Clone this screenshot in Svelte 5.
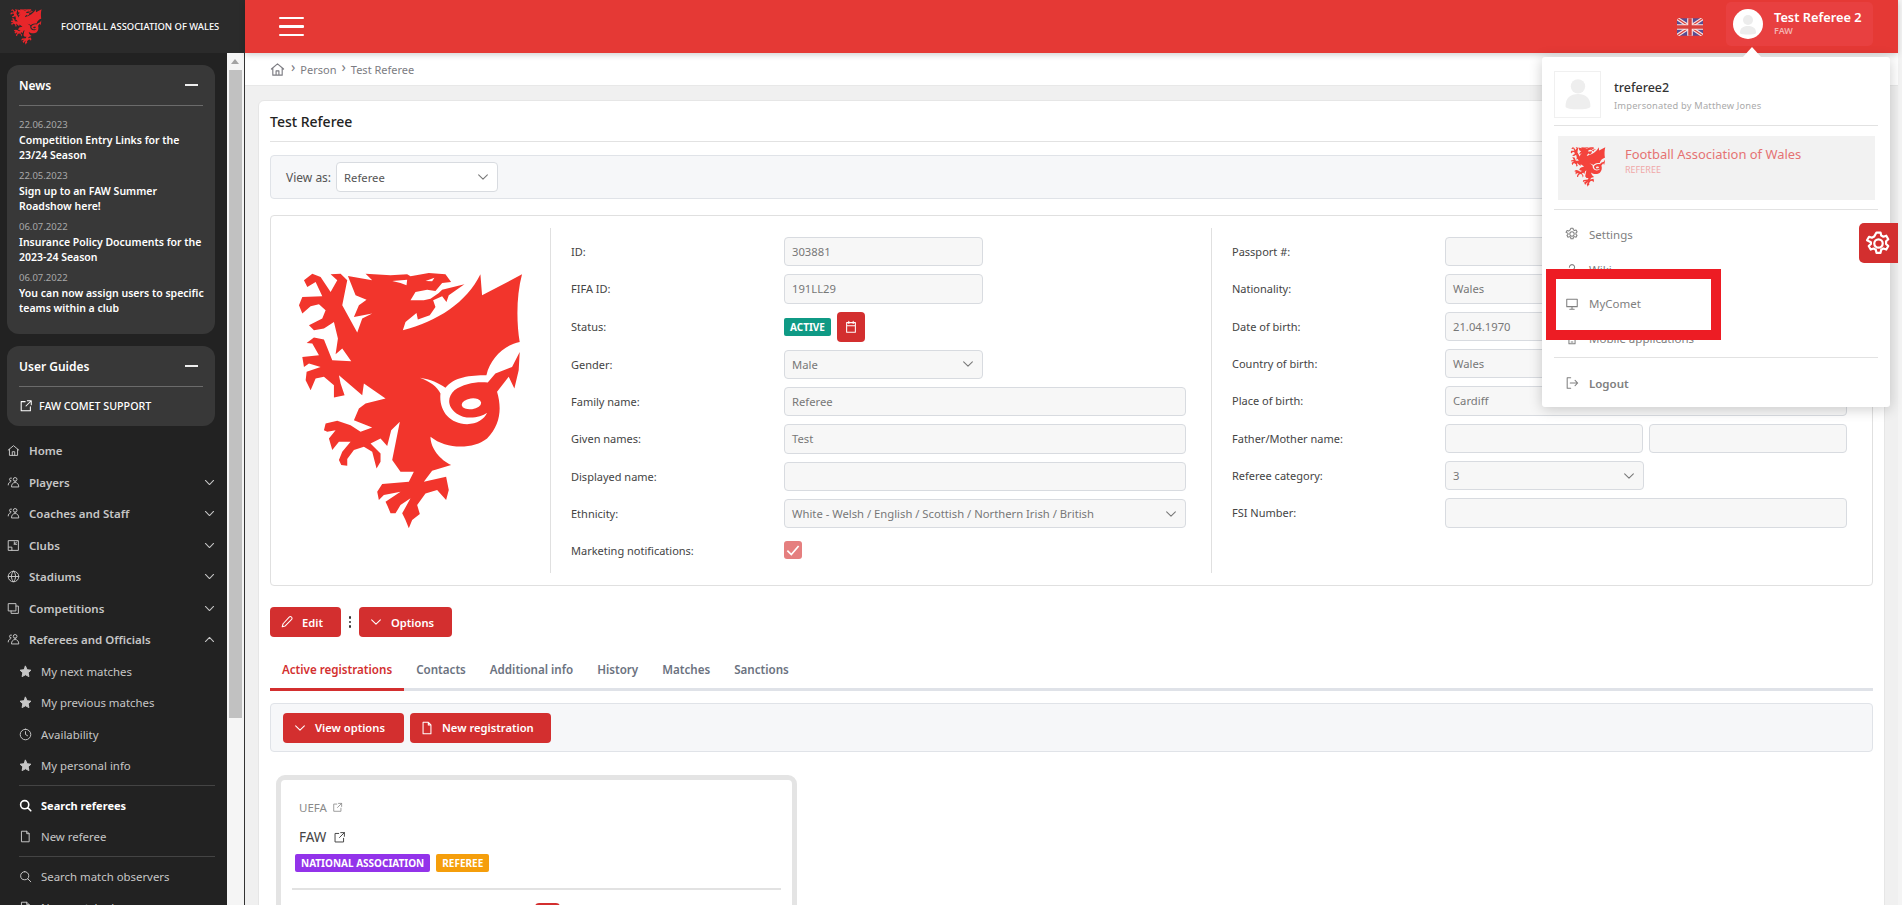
<script>
	const icons = {
		home: 'M1.500 7.500 8 2l6.500 5.500M3 6.500V14h10V6.500M6.500 14V9.500h3V14',
		users: 'M10 6.500a2.300 2.300 0 1 0 0-4.600 2.300 2.300 0 0 0 0 4.600zM5.500 13c0-3 2-5 4.500-5s4.500 2 4.500 5zM5 6a1.800 1.800 0 1 1 .5-3.500M1.500 11c0-2 1-3.500 3-4',
		clubs: 'M2 2h12v12H2zM2 10h4v4M9 3.500v3h3M9 6.500l3-3',
		globe: 'M8 1.500a6.500 6.500 0 1 0 0 13 6.500 6.500 0 0 0 0-13zM1.500 8h13M8 1.500c-3.500 3.500-3.500 9.500 0 13M8 1.500c3.500 3.500 3.500 9.500 0 13',
		copy: 'M2 2h9v9H2zM11 5h3v9H5v-3',
		clock: 'M8 1.500a6.500 6.500 0 1 0 0 13 6.500 6.500 0 0 0 0-13zM8 4.500V8l2.500 1.500',
		search: 'M7 2a5 5 0 1 0 0 10A5 5 0 0 0 7 2zM10.700 10.700 14.500 14.500',
		file: 'M3.500 1.500h6l3 3v10h-9zM9.500 1.500v3h3',
		ext: 'M7 3H2.500v10.500H13V9M9.500 2H14v4.500M14 2 8 8',
		pencil: 'M10.500 2.500a1.800 1.800 0 0 1 2.800 2.500L6 12.500l-3.500 1 1-3.500z',
		down: 'M3 5.500 8 10.500l5-5',
		gear: 'M8 5.500a2.500 2.500 0 1 0 0 5 2.500 2.500 0 0 0 0-5zM6.800 1.500h2.400l.4 1.800 1.300.7 1.700-.6 1.200 2.100-1.300 1.200v1.600l1.300 1.200-1.200 2.100-1.700-.6-1.300.7-.4 1.800H6.800l-.4-1.800-1.300-.7-1.700.6-1.200-2.100 1.300-1.200V7.300L1.200 6.100l1.200-2.100 1.700.6 1.300-.7z',
		help: 'M5 6a3 3 0 1 1 4.500 2.600C8.500 9.200 8 9.800 8 11M8 13.500v.5',
		monitor: 'M2 2.500h12v8.500H2zM8 11v3M5.500 14h5',
		phone: 'M4.500 1.500h7v13h-7zM7 12.500h2',
		logout: 'M6.500 2H2.500v12h4M6 8h8.500M11.500 5l3 3-3 3'
	};

	const news = [
		['22.06.2023', 'Competition Entry Links for the 23/24 Season'],
		['22.05.2023', 'Sign up to an FAW Summer Roadshow here!'],
		['06.07.2022', 'Insurance Policy Documents for the 2023-24 Season'],
		['06.07.2022', 'You can now assign users to specific teams within a club']
	];

	const menu = [
		{ icon: 'home', label: 'Home' },
		{ icon: 'users', label: 'Players', chevron: 'down' },
		{ icon: 'users', label: 'Coaches and Staff', chevron: 'down' },
		{ icon: 'clubs', label: 'Clubs', chevron: 'down' },
		{ icon: 'globe', label: 'Stadiums', chevron: 'down' },
		{ icon: 'copy', label: 'Competitions', chevron: 'down' },
		{ icon: 'users', label: 'Referees and Officials', chevron: 'up' }
	];

	const leftFields = [
		{ label: 'ID:', value: '303881', short: true },
		{ label: 'FIFA ID:', value: '191LL29', short: true },
		{ label: 'Status:', status: true },
		{ label: 'Gender:', value: 'Male', short: true, select: true },
		{ label: 'Family name:', value: 'Referee' },
		{ label: 'Given names:', value: 'Test' },
		{ label: 'Displayed name:', value: '' },
		{ label: 'Ethnicity:', value: 'White - Welsh / English / Scottish / Northern Irish / British', select: true },
		{ label: 'Marketing notifications:', check: true }
	];

	const rightFields = [
		{ label: 'Passport #:', value: '' },
		{ label: 'Nationality:', value: 'Wales' },
		{ label: 'Date of birth:', value: '21.04.1970' },
		{ label: 'Country of birth:', value: 'Wales' },
		{ label: 'Place of birth:', value: 'Cardiff' },
		{ label: 'Father/Mother name:', pair: true },
		{ label: 'Referee category:', value: '3', short: true, select: true },
		{ label: 'FSI Number:', value: '' }
	];

	const tabs = ['Active registrations', 'Contacts', 'Additional info', 'History', 'Matches', 'Sanctions'];
</script>

{#snippet icon(name, cls = '')}
	<svg class="icon {cls}" viewBox="0 0 16 16" aria-hidden="true"><path d={icons[name]} /></svg>
{/snippet}

{#snippet star()}
	<svg class="icon solid" viewBox="0 0 16 16" aria-hidden="true"><path d="M8 1.500l2 4.300 4.700.6-3.400 3.200.9 4.700L8 12l-4.200 2.300.9-4.700L1.300 6.400 6 5.800z" /></svg>
{/snippet}

{#snippet dragon(cls)}
	<svg class={cls} viewBox="140 180 680 775" aria-hidden="true">
		<path fill-rule="evenodd" d="M292 192L365 205L345 185L420 190L470 187L480 193L535 183L585 187L602 210L575 213L555 237L530 233L495 240L480 265L520 265L540 260L565 243L575 233L642 217L595 250L588 270L575 253L548 265L555 285L538 310L502 323L498 303L465 330L457 355C560 330 650 270 690 187L695 250L815 187C798 250 798 330 808 390C760 400 720 440 708 490C660 490 610 495 585 528C565 515 540 502 508 498C540 510 560 525 570 545C565 595 595 636 650 637C680 637 702 622 710 603C690 618 645 625 618 605C590 585 590 555 612 535C640 515 680 508 712 512L735 485L785 465L808 420L805 475L792 530L775 495L740 540C755 590 750 640 710 680C670 712 590 715 540 675C540 710 570 745 602 760L545 777L520 810L587 795L595 835L587 865L560 835L525 845L500 880L508 907L485 925L475 950L465 925L455 905L480 860L450 880L435 905L420 905L412 885L405 870L450 840L400 850L385 865L380 840L395 817L475 810L490 780L450 780L425 745L448 630L422 655L410 703L390 680L360 695L390 725L390 750L378 770L365 720L340 705L310 715L290 742L290 762L272 760L265 745L275 720L300 690L265 690L245 715L235 680L255 655L230 660L220 655L225 635L260 627L300 640L330 660L365 647L310 625L325 590L345 575L405 560L340 515L335 550L265 490L270 515L282 550L250 557L250 520L220 495L195 500L180 535L165 505L168 480L210 465L175 455L160 465L155 435L205 430L185 395L168 393L190 377L220 383L245 445L302 448L275 410L255 427L262 380L250 330L220 350L190 355L175 340L215 320L225 295L205 277L180 283L155 305L145 280L155 255L215 253L195 210L170 225L160 205L185 185L210 195L240 240L260 205L240 187L270 185L290 205L275 280L320 362L335 320L365 305L310 315L325 280L348 263L315 250Z
		M425 207L470 203L468 220L450 213Z
		M525 207L552 197L545 208Z
		M634 580a29 16 -8 1 0 58 -8a29 16 -8 1 0 -58 8Z" />
	</svg>
{/snippet}

{#snippet field(f)}
	<div class="row">
		<span class="label">{f.label}</span>
		<div class="value">
			{#if f.status}
				<span class="badge teal">ACTIVE</span>
				<span class="square">
					<svg class="icon" viewBox="0 0 16 16" aria-hidden="true"><path d="M3 3h10v11H3zM3 6.500h10M5.500 1.500V4M10.500 1.500V4" /></svg>
				</span>
			{:else if f.check}
				<span class="check">
					<svg viewBox="0 0 16 16" aria-hidden="true"><path d="M3 8.500 6.500 12 13 4.500" /></svg>
				</span>
			{:else if f.pair}
				<div class="pair"><div class="input"></div><div class="input"></div></div>
			{:else}
				<div class="input" class:short={f.short}>
					<span class="txt">{f.value}</span>
					{#if f.select}{@render icon('down', 'chev')}{/if}
				</div>
			{/if}
		</div>
	</div>
{/snippet}

<div class="app">
	<aside class="sidebar">
		<div class="brand">
			{@render dragon('brand-logo')}
			<span>FOOTBALL ASSOCIATION OF WALES</span>
		</div>
		<div class="side-body">
			<div class="side-scroll">
				<section class="panel news">
					<header><h3>News</h3><i class="minus"></i></header>
					{#each news as [date, title]}
						<div class="date">{date}</div>
						<div class="headline">{title}</div>
					{/each}
				</section>
				<section class="panel guides">
					<header><h3>User Guides</h3><i class="minus"></i></header>
					<div class="support">{@render icon('ext')}<span>FAW COMET SUPPORT</span></div>
				</section>
				<nav>
					{#each menu as m}
						<div class="nav-item">
							{@render icon(m.icon)}
							<span>{m.label}</span>
							{#if m.chevron}{@render icon('down', m.chevron === 'up' ? 'arrow flip' : 'arrow')}{/if}
						</div>
					{/each}
					<div class="sub">{@render star()}<span>My next matches</span></div>
					<div class="sub">{@render star()}<span>My previous matches</span></div>
					<div class="sub">{@render icon('clock')}<span>Availability</span></div>
					<div class="sub">{@render star()}<span>My personal info</span></div>
					<hr />
					<div class="sub strong">{@render icon('search')}<span>Search referees</span></div>
					<div class="sub">{@render icon('file')}<span>New referee</span></div>
					<hr />
					<div class="sub">{@render icon('search')}<span>Search match observers</span></div>
					<div class="sub">{@render icon('file')}<span>New match observer</span></div>
				</nav>
			</div>
			<div class="scrollbar"><b></b><i></i></div>
		</div>
	</aside>

	<div class="main">
		<div class="topbar">
			<div class="burger"><i></i><i></i><i></i></div>
			<svg class="flag" viewBox="0 0 60 40" aria-hidden="true">
				<rect width="60" height="40" fill="#3f51a5" />
				<path d="M0 0 60 40M60 0 0 40" stroke="#fff" stroke-width="8" />
				<path d="M0 0 60 40M60 0 0 40" stroke="#d8433f" stroke-width="3" />
				<path d="M30 0v40M0 20h60" stroke="#fff" stroke-width="13" />
				<path d="M30 0v40M0 20h60" stroke="#d8433f" stroke-width="8" />
			</svg>
			<div class="user">
				<span class="avatar">
					<svg viewBox="0 0 30 30" aria-hidden="true"><circle cx="15" cy="11" r="5" /><path d="M7 24c0-5 3-7 8-7s8 2 8 7c0 2-16 2-16 0z" /></svg>
				</span>
				<div class="user-text"><strong>Test Referee 2</strong><small>FAW</small></div>
			</div>
		</div>

		<div class="crumbs">
			{@render icon('home')}
			<em>›</em><span>Person</span><em>›</em><span>Test Referee</span>
		</div>

		<div class="content">
			<div class="card">
				<h1>Test Referee</h1>
				<div class="toolbar view-as">
					<span>View as:</span>
					<div class="input select-white"><span class="txt">Referee</span>{@render icon('down', 'chev')}</div>
				</div>

				<div class="profile">
					<div class="crest">{@render dragon('crest-logo')}</div>
					<div class="col">
						{#each leftFields as f}{@render field(f)}{/each}
					</div>
					<div class="col">
						{#each rightFields as f}{@render field(f)}{/each}
					</div>
				</div>

				<div class="actions">
					<span class="btn edit">{@render icon('pencil')}Edit</span>
					<span class="dots"><i></i><i></i><i></i></span>
					<span class="btn options">{@render icon('down')}Options</span>
				</div>

				<div class="tabs">
					{#each tabs as t, i}
						<span class="tab" class:active={i === 0}>{t}</span>
					{/each}
				</div>

				<div class="toolbar reg-tools">
					<span class="btn view-opts">{@render icon('down')}View options</span>
					<span class="btn new-reg">{@render icon('file')}New registration</span>
				</div>

				<div class="reg-card">
					<div class="parent">UEFA {@render icon('ext')}</div>
					<div class="org">FAW {@render icon('ext')}</div>
					<div class="reg-badges">
						<span class="badge purple">NATIONAL ASSOCIATION</span>
						<span class="badge orange">REFEREE</span>
					</div>
					<hr />
					<div class="reg-red"></div>
				</div>
			</div>
		</div>
	</div>

	<div class="dropdown">
		<div class="me">
			<span class="me-photo">
				<svg viewBox="0 0 47 47" aria-hidden="true"><circle cx="24" cy="15" r="7.500" /><path d="M11 36c0-9 5-13 13-13s13 4 13 13c0 4-26 4-26 0z" /></svg>
			</span>
			<div>
				<div class="me-name">treferee2</div>
				<div class="me-sub">Impersonated by Matthew Jones</div>
			</div>
		</div>
		<hr />
		<div class="org-box">
			{@render dragon('org-logo')}
			<div>
				<div class="org-name">Football Association of Wales</div>
				<div class="org-role">REFEREE</div>
			</div>
		</div>
		<hr />
		<div class="menu-list">
			<div class="menu-item">{@render icon('gear')}<span>Settings</span></div>
			<div class="menu-item">{@render icon('help')}<span>Wiki</span></div>
			<div class="menu-item">{@render icon('monitor')}<span>MyComet</span></div>
			<div class="menu-item">{@render icon('phone')}<span>Mobile applications</span></div>
		</div>
		<hr />
		<div class="menu-item logout">{@render icon('logout')}<span>Logout</span></div>
	</div>
	<div class="gear-tab">{@render icon('gear')}</div>
	<div class="marker"></div>
</div>

<style>
	:global(body) {
		margin: 0;
		background: #f4f4f4;
		font-family: "Noto Sans", "Liberation Sans", sans-serif;
		overflow: hidden;
	}

	.app {
		position: relative;
		display: flex;
		width: 1902px;
		height: 905px;
		overflow: hidden;
		font-size: 12px;
		color: #444;
	}

	.icon {
		width: 14px;
		height: 14px;
		flex: none;
		fill: none;
		stroke: currentColor;
		stroke-width: 1.2;
		stroke-linecap: round;
		stroke-linejoin: round;
	}

	.icon.solid {
		fill: currentColor;
	}

	/* sidebar */
	.sidebar {
		width: 245px;
		flex: none;
		display: flex;
		flex-direction: column;
		background: #222;
		color: #fff;
	}

	.brand {
		height: 53px;
		flex: none;
		display: flex;
		align-items: center;
		padding-left: 10px;
		background: #2b2b2b;
		font-size: 9.400px;
		font-weight: 500;
	}

	.brand :global(.brand-logo) {
		width: 32px;
		height: 36px;
		fill: #e8262a;
		margin-right: 19px;
	}

	.side-body {
		flex: 1;
		display: flex;
		min-height: 0;
	}

	.side-scroll {
		width: 227px;
		flex: none;
		padding-top: 12px;
		box-sizing: border-box;
	}

	.scrollbar {
		position: relative;
		flex: 1;
		background: #f5f5f5;
		border-right: 1px solid #333;
	}

	.scrollbar i {
		position: absolute;
		left: 2px;
		right: 2px;
		top: 17px;
		height: 648px;
		background: #c1c1c1;
	}

	.scrollbar b {
		position: absolute;
		left: 4px;
		top: 6px;
		border-left: 4.500px solid transparent;
		border-right: 4.500px solid transparent;
		border-bottom: 5px solid #a3a3a3;
	}

	.panel {
		margin: 0 12px 12px 7px;
		padding: 0 12px;
		background: #383838;
		border-radius: 12px;
	}

	.panel header {
		display: flex;
		align-items: center;
		justify-content: space-between;
		height: 40px;
		border-bottom: 1px solid #6b6b6b;
		padding-right: 5px;
		margin-bottom: 10px;
	}

	.panel h3 {
		margin: 0;
		font-size: 12px;
		font-weight: 600;
	}

	.minus {
		width: 13px;
		height: 2px;
		background: #eee;
	}

	.news {
		height: 269px;
		box-sizing: border-box;
	}

	.date {
		font-size: 9.500px;
		line-height: 17px;
		color: #a8a8a8;
	}

	.headline {
		font-size: 10.500px;
		font-weight: 600;
		line-height: 15px;
		margin-right: -3px;
		margin-bottom: 4px;
	}

	.guides {
		height: 80px;
		box-sizing: border-box;
	}

	.support {
		display: flex;
		align-items: center;
		gap: 6px;
		font-size: 10.700px;
		font-weight: 500;
		margin-top: 12px;
	}

	nav {
		margin-top: -3px;
		padding: 0 12px 0 7px;
		color: #c6c6c6;
	}

	.nav-item {
		display: flex;
		align-items: center;
		gap: 9px;
		height: 31.500px;
		font-size: 11.500px;
		font-weight: 600;
	}

	.nav-item .icon {
		width: 13px;
		height: 13px;
	}

	.nav-item span {
		flex: 1;
	}

	.nav-item :global(.arrow) {
		width: 13px;
		height: 13px;
		stroke-width: 1.300;
		margin-right: -1px;
	}

	.nav-item :global(.flip) {
		transform: rotate(180deg);
	}

	.sub {
		display: flex;
		align-items: center;
		gap: 9px;
		height: 31.500px;
		padding-left: 12px;
		font-size: 11.400px;
	}

	.sub .icon {
		width: 13px;
		height: 13px;
	}

	.sub.strong {
		color: #fff;
		font-weight: 700;
		font-size: 11px;
	}

	.sub.strong .icon {
		stroke-width: 2;
	}

	nav hr {
		margin: 3px 0 4px 12px;
		border: 0;
		border-top: 1px solid #444;
	}

	/* top bar */
	.main {
		width: 1653px;
		flex: none;
		display: flex;
		flex-direction: column;
		background: #f0f0f0;
	}

	.topbar {
		height: 53px;
		flex: none;
		display: flex;
		align-items: center;
		background: #e53935;
		padding-left: 34px;
		box-shadow: 0 2px 6px rgba(0, 0, 0, 0.18);
		position: relative;
		color: #fff;
	}

	.burger {
		display: flex;
		flex-direction: column;
		gap: 6px;
		width: 25px;
	}

	.burger i {
		height: 2.500px;
		background: #fff;
		border-radius: 1px;
	}

	.flag {
		width: 26px;
		height: 18px;
		margin-left: auto;
		opacity: 0.85;
	}

	.user {
		display: flex;
		align-items: center;
		width: 147px;
		height: 44px;
		box-sizing: border-box;
		margin: 0 25px 7px 23px;
		margin-top: 1px;
		padding-left: 7px;
		background: #e84040;
		border-radius: 5px;
	}

	.avatar {
		width: 30px;
		height: 30px;
		background: #fff;
		border-radius: 50%;
		margin-right: 11px;
	}

	.avatar svg {
		display: block;
		fill: #ececec;
	}

	.user-text {
		display: flex;
		flex-direction: column;
		margin-top: -2px;
	}

	.user-text strong {
		font-size: 12.800px;
		font-weight: 600;
		line-height: 16px;
	}

	.user-text small {
		font-size: 9px;
		font-weight: 600;
		line-height: 12px;
		color: #f3b3b1;
	}

	.crumbs {
		height: 33px;
		flex: none;
		display: flex;
		align-items: center;
		gap: 5px;
		box-sizing: border-box;
		padding-left: 25px;
		background: #fff;
		border-bottom: 1px solid #e8e8e8;
		color: #7c7c82;
		font-size: 11px;
	}

	.crumbs .icon {
		width: 15px;
		height: 15px;
		margin-right: 1px;
	}

	.crumbs em {
		font-style: normal;
		font-size: 14px;
		line-height: 14px;
		margin-top: -4px;
	}

	/* card */
	.content {
		padding: 14px 13px 0;
		flex: 1;
		min-height: 0;
	}

	.card {
		background: #fff;
		border: 1px solid #e6e6e6;
		border-radius: 6px;
		box-sizing: border-box;
		height: 900px;
		padding: 0 11px;
	}

	h1 {
		margin: 0 0 13px;
		height: 41px;
		line-height: 41px;
		font-size: 14px;
		font-weight: 500;
		color: #222;
		border-bottom: 1px solid #e2e2e2;
		box-sizing: border-box;
	}

	.toolbar {
		display: flex;
		align-items: center;
		box-sizing: border-box;
		background: #f6f7f9;
		border: 1px solid #e0e3e8;
		border-radius: 4px;
	}

	.view-as {
		height: 44px;
		padding-left: 15px;
		gap: 5px;
		color: #555;
	}

	.input {
		display: flex;
		align-items: center;
		justify-content: space-between;
		height: 29.330px;
		box-sizing: border-box;
		padding: 0 7px;
		background: #f7f7f7;
		border: 1px solid #d8dbe0;
		border-radius: 4px;
		color: #777;
		font-size: 11.250px;
	}

	.input.short {
		width: 199px;
	}

	.input :global(.chev) {
		color: #777;
	}

	.select-white {
		width: 162px;
		height: 30px;
		background: #fff;
		color: #555;
	}

	.profile {
		display: grid;
		grid-template-columns: 279px 1fr 1fr;
		height: 371px;
		box-sizing: border-box;
		margin-top: 16px;
		padding: 12px 0;
		border: 1px solid #e0e0e0;
		border-radius: 4px;
	}

	.crest {
		display: flex;
		align-items: center;
		justify-content: center;
	}

	.crest :global(.crest-logo) {
		width: 227px;
		height: 258px;
		fill: #f2352c;
	}

	.col {
		display: flex;
		flex-direction: column;
		gap: 8px;
		padding: 9px 25px 0 20px;
		border-left: 1px solid #e0e0e0;
	}

	.row {
		display: flex;
		align-items: center;
		min-height: 29.330px;
	}

	.label {
		width: 213px;
		flex: none;
		font-size: 11px;
		color: #444;
	}

	.value {
		flex: 1;
		display: flex;
		align-items: center;
		min-width: 0;
	}

	.value > .input {
		flex: 1;
	}

	.value > .input.short {
		flex: none;
	}

	.pair {
		flex: 1;
		display: grid;
		grid-template-columns: 1fr 1fr;
		gap: 6px;
	}

	.badge {
		display: inline-flex;
		align-items: center;
		height: 18px;
		padding: 0 6px;
		border-radius: 2px;
		color: #fff;
		font-size: 10px;
		font-weight: 700;
	}

	.teal {
		background: #0f9a85;
	}

	.purple {
		background: #9333ea;
	}

	.orange {
		background: #f59e0b;
	}

	.square {
		display: flex;
		align-items: center;
		justify-content: center;
		width: 28px;
		height: 30px;
		margin-left: 6px;
		background: #d32f2f;
		border-radius: 4px;
		color: #fff;
	}

	.check {
		width: 18px;
		height: 18px;
		margin-top: -2px;
		background: #e57f7f;
		border-radius: 3px;
	}

	.check svg {
		display: block;
		fill: none;
		stroke: #fff;
		stroke-width: 1.500;
	}

	/* buttons */
	.btn {
		display: inline-flex;
		align-items: center;
		box-sizing: border-box;
		height: 30px;
		gap: 8px;
		padding-left: 10px;
		background: #d32f2f;
		border-radius: 4px;
		color: #fff;
		font-weight: 600;
		font-size: 11.200px;
	}

	.actions {
		display: flex;
		align-items: center;
		margin-top: 21px;
	}

	.edit {
		width: 71px;
	}

	.options {
		width: 93px;
	}

	.dots {
		display: flex;
		flex-direction: column;
		align-items: center;
		gap: 2px;
		width: 18px;
	}

	.dots i {
		width: 2.500px;
		height: 2.500px;
		background: #333;
		border-radius: 50%;
	}

	.tabs {
		display: flex;
		height: 48px;
		margin-top: 3px;
		border-bottom: 3px solid #dfe2e8;
	}

	.tab {
		display: flex;
		align-items: center;
		padding: 10px 12px 0;
		font-weight: 600;
		font-size: 11.600px;
		color: #6b7280;
		position: relative;
	}

	.tab.active {
		color: #d32f2f;
	}

	.tab.active::after {
		content: "";
		position: absolute;
		left: 0;
		right: 0;
		bottom: -3px;
		height: 3px;
		background: #d32f2f;
	}

	.reg-tools {
		height: 49px;
		margin-top: 12px;
		padding-left: 12px;
		gap: 6px;
	}

	.view-opts {
		width: 121px;
	}

	.new-reg {
		width: 141px;
	}

	.reg-card {
		width: 521px;
		height: 200px;
		box-sizing: border-box;
		margin: 23px 0 0 6px;
		border: 5px solid #e4e4e4;
		border-radius: 9px;
		padding: 17px 11px 0;
	}

	.parent {
		display: flex;
		align-items: center;
		gap: 5px;
		padding-left: 7px;
		color: #8a8a8a;
		font-size: 11.500px;
		height: 20px;
	}

	.parent .icon {
		width: 11px;
		height: 11px;
	}

	.org {
		display: flex;
		align-items: center;
		gap: 7px;
		padding-left: 7px;
		margin-top: 10px;
		color: #444;
		font-size: 13.500px;
		height: 20px;
	}

	.org .icon {
		width: 13px;
		height: 13px;
	}

	.reg-badges {
		display: flex;
		gap: 6px;
		margin: 7px 0 0 3px;
	}

	.reg-card hr {
		margin: 16px 0 0;
		border: 0;
		border-top: 2px solid #e2e2e2;
	}

	.reg-red {
		width: 25px;
		height: 20px;
		margin: 13px 0 0 243px;
		background: #d32f2f;
		border-radius: 4px;
	}

	/* user menu */
	.dropdown {
		position: absolute;
		left: 1542px;
		top: 57px;
		width: 348px;
		height: 350px;
		box-sizing: border-box;
		padding: 14px 12px 0;
		background: #fff;
		border-radius: 3px;
		box-shadow: 0 2px 14px rgba(0, 0, 0, 0.2);
		color: #777;
	}

	.dropdown::before {
		content: "";
		position: absolute;
		left: 201px;
		top: -10px;
		border-left: 9px solid transparent;
		border-right: 9px solid transparent;
		border-bottom: 10px solid #fff;
	}

	.dropdown hr {
		margin: 0;
		border: 0;
		border-top: 1px solid #e2e2e2;
	}

	.me {
		display: flex;
		gap: 13px;
		height: 54px;
	}

	.me-photo {
		width: 47px;
		height: 47px;
		box-sizing: border-box;
		border: 1px solid #f0f0f0;
	}

	.me-photo svg {
		display: block;
		width: 45px;
		height: 45px;
		fill: #eee;
	}

	.me-name {
		margin-top: 8px;
		font-size: 12.500px;
		color: #333;
		font-weight: 500;
	}

	.me-sub {
		margin-top: 3px;
		font-size: 9.300px;
		color: #aaa;
		letter-spacing: 0.2px;
	}

	.org-box {
		display: flex;
		align-items: center;
		gap: 19px;
		height: 64px;
		margin: 10px 3px 9px 4px;
		padding-left: 12px;
		padding-bottom: 3px;
		box-sizing: border-box;
		background: #f2f2f2;
	}

	.org-box :global(.org-logo) {
		width: 36px;
		height: 40px;
		fill: #f4433c;
	}

	.org-name {
		font-size: 12.950px;
		color: #e57373;
		line-height: 17px;
		margin-top: -11px;
	}

	.org-role {
		font-size: 9px;
		color: #f0a8a8;
		line-height: 13px;
	}

	.menu-list {
		padding: 7px 0 3px;
		height: 137px;
	}

	.menu-item {
		display: flex;
		align-items: center;
		gap: 10px;
		height: 34.700px;
		padding-left: 11px;
		font-size: 11.500px;
		color: #808080;
	}

	.logout {
		margin-top: 8px;
		font-weight: 600;
	}

	.gear-tab {
		position: absolute;
		left: 1859px;
		top: 223px;
		width: 39px;
		height: 40px;
		display: flex;
		align-items: center;
		justify-content: center;
		background: #d32f2f;
		border-radius: 5px 0 0 5px;
		color: #fff;
	}

	.gear-tab .icon {
		width: 27px;
		height: 27px;
		stroke-width: 1.300;
	}

	.marker {
		position: absolute;
		left: 1546px;
		top: 269px;
		width: 175px;
		height: 71px;
		box-sizing: border-box;
		border: 10px solid #ed1c24;
	}
</style>
